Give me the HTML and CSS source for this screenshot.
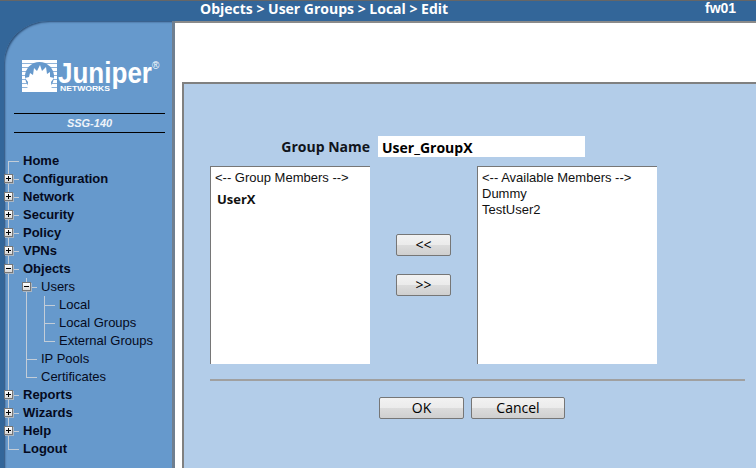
FILE: index.html
```html
<!DOCTYPE html>
<html lang="en">
<head>
<meta charset="utf-8">
<title>Objects &gt; User Groups &gt; Local &gt; Edit</title>
<link rel="stylesheet" href="styles.css">
</head>
<body>
<header class="topbar">
  <div class="crumb">Objects &gt; User Groups &gt; Local &gt; Edit</div>
  <div class="host">fw01</div>
</header>
<div class="shell">
  <aside class="sidebar">
    <svg class="logo" width="140" height="36" viewBox="0 0 140 36" aria-label="Juniper Networks">
      <rect x="0" y="0" width="35" height="32" fill="#fff"/>
      <g fill="#8fb3d9">
        <rect x="0" y="3" width="35" height="1"/><rect x="0" y="7" width="35" height="1"/>
        <rect x="0" y="11" width="35" height="1"/><rect x="0" y="15" width="35" height="1"/>
        <rect x="0" y="19" width="35" height="1"/><rect x="0" y="23" width="35" height="1"/>
        <rect x="0" y="27" width="35" height="1"/>
      </g>
      <circle cx="17.5" cy="16.5" r="14.5" fill="#6699cc"/>
      <path fill="#fff" d="M18 5 L20 11 L24 7 L25 14 L28 12 L28 17 L32 18 L29 22 L30 32 L5 32 L6 22 L3 18 L7 17 L8 13 L11 15 L12 8 L15 11 Z"/>
      <text class="logo-word" x="36" y="23" textLength="94" lengthAdjust="spacingAndGlyphs">Juniper</text>
      <text class="logo-sub" x="38" y="31" textLength="50" lengthAdjust="spacingAndGlyphs">NETWORKS</text>
      <text class="logo-reg" x="130" y="9">®</text>
    </svg>
    <div class="model">SSG-140</div>
    <nav class="tree">
      <div class="row top first"><span class="leaf">Home</span></div>
      <div class="row top"><i class="box plus"></i><span>Configuration</span></div>
      <div class="row top"><i class="box plus"></i><span>Network</span></div>
      <div class="row top"><i class="box plus"></i><span>Security</span></div>
      <div class="row top"><i class="box plus"></i><span>Policy</span></div>
      <div class="row top"><i class="box plus"></i><span>VPNs</span></div>
      <div class="row top"><i class="box minus"></i><span>Objects</span></div>
      <div class="sub sub1">
        <div class="row second"><i class="box minus"></i><span>Users</span></div>
        <div class="sub sub2">
          <div class="row third"><span>Local</span></div>
          <div class="row third"><span>Local Groups</span></div>
          <div class="row third last"><span>External Groups</span></div>
        </div>
        <div class="row second"><span>IP Pools</span></div>
        <div class="row second last"><span>Certificates</span></div>
      </div>
      <div class="row top"><i class="box plus"></i><span>Reports</span></div>
      <div class="row top"><i class="box plus"></i><span>Wizards</span></div>
      <div class="row top"><i class="box plus"></i><span>Help</span></div>
      <div class="row top last"><span>Logout</span></div>
    </nav>
  </aside>
  <main class="content">
    <section class="panel">
      <div class="name-row">
        <label class="name-label">Group Name</label>
        <div class="name-input">User_GroupX</div>
      </div>
      <div class="lists">
        <div class="listbox members">
          <div class="opt">&lt;-- Group Members --&gt;</div>
          <div class="opt strong">UserX</div>
        </div>
        <div class="movers">
          <button class="btn mover">&lt;&lt;</button>
          <button class="btn mover">&gt;&gt;</button>
        </div>
        <div class="listbox avail">
          <div class="opt">&lt;-- Available Members --&gt;</div>
          <div class="opt tight">Dummy</div>
          <div class="opt tight">TestUser2</div>
        </div>
      </div>
      <div class="rule"></div>
      <div class="actions">
        <button class="btn ok">OK</button>
        <button class="btn cancel">Cancel</button>
      </div>
    </section>
  </main>
</div>
</body>
</html>
```
FILE: styles.css
```css
* { box-sizing: border-box; }
html, body { margin: 0; height: 468px; overflow: hidden; }
body {
  background: #336699;
  border-top: 1px solid #666;
  font-family: "Liberation Sans", Arial, sans-serif;
  display: flex;
  flex-direction: column;
}
.topbar {
  height: 20px;
  flex: none;
  display: flex;
  color: #fff;
  font-weight: bold;
  line-height: 14px;
}
.crumb {
  margin-left: 200px;
  width: 505px;
  font-family: "Open Sans", sans-serif;
  font-size: 14px;
  line-height: 16px;
}
.host { font-size: 14px; line-height: 15px; }
.shell { flex: 1; display: flex; min-height: 0; }
.sidebar {
  width: 171px;
  margin-left: 4px;
  flex: none;
  background: #6699cc;
  border-top-left-radius: 44px 42px;
  border-right: 3px solid #6f7f90;
  box-shadow: inset 2px 2px 2px -1px #2b4f78;
  padding-top: 39px;
}
.logo { display: block; margin-left: 18px; overflow: visible; }
.logo-word { font-family: "Liberation Sans", sans-serif; font-weight: bold; font-size: 30px; fill: #fff; }
.logo-sub { font-family: "Liberation Sans", sans-serif; font-weight: bold; font-size: 7px; fill: #fff; }
.logo-reg { font-family: "Liberation Sans", sans-serif; font-size: 10px; fill: #fff; }
.model {
  margin: 17px 7px 0 10px;
  height: 20px;
  border-top: 1px solid #000;
  border-bottom: 1px solid #000;
  color: #eef3f9;
  font-style: italic;
  font-weight: bold;
  font-size: 11px;
  line-height: 18px;
  text-align: center;
}
.tree { margin-top: 19px; color: #050a20; }
.row {
  height: 18px;
  line-height: 18px;
  font-size: 13px;
  position: relative;
  white-space: nowrap;
}
.row.top { font-size: 13px; font-weight: bold; padding-left: 19px; }
.row.second { padding-left: 37px; }
.row.third { padding-left: 55px; }
.row::before {
  content: "";
  position: absolute;
  top: 9px;
  height: 1px;
  background: #c3cdd8;
}
.row.top::before { left: 4px; width: 11px; }
.row.second::before { left: 22px; width: 11px; }
.row.third::before { left: 40px; width: 11px; }
.row::after {
  content: "";
  position: absolute;
  top: 0;
  bottom: 0;
  width: 1px;
  background: #c3cdd8;
}
.row.top::after { left: 4px; }
.row.second::after { left: 22px; }
.row.third::after { left: 40px; }
.row.first::after { top: 9px; }
.row.last::after { bottom: 8px; }
.sub { position: relative; }
.sub::before {
  content: "";
  position: absolute;
  top: 0;
  bottom: 0;
  left: 4px;
  width: 1px;
  background: #c3cdd8;
}
.sub2::before { left: 22px; }
.box {
  position: absolute;
  top: 4px;
  left: 0;
  width: 9px;
  height: 9px;
  z-index: 1;
  border: 1px solid #777;
  background: linear-gradient(#fff, #d8d8d8);
  box-shadow: 1px 1px 0 #a9b6c4;
}
.second .box { left: 18px; }
.box::before {
  content: "";
  position: absolute;
  left: 1px;
  top: 3px;
  width: 5px;
  height: 1px;
  background: #000;
}
.plus::after {
  content: "";
  position: absolute;
  left: 3px;
  top: 1px;
  width: 1px;
  height: 5px;
  background: #000;
}
.content {
  flex: 1;
  min-width: 0;
  background: #fff;
  border-top: 2px solid #8a8a8a;
  padding: 59px 0 0 7px;
  display: flex;
}
.panel {
  flex: 1;
  background: #b3cde9;
  border-top: 2px solid #808080;
  border-left: 2px solid #808080;
  padding: 52px 0 0 26px;
}
.name-row { display: flex; align-items: center; gap: 8px; height: 21px; }
.name-label {
  width: 160px;
  text-align: right;
  font-family: "Open Sans", sans-serif;
  font-weight: bold;
  font-size: 14px;
  color: #10141c;
  line-height: 20px;
}
.name-input {
  width: 207px;
  height: 21px;
  background: #fff;
  padding-left: 4px;
  font-family: "Open Sans", sans-serif;
  font-weight: bold;
  font-size: 14px;
  line-height: 24px;
  color: #000;
}
.lists { display: flex; margin-top: 9px; height: 198px; }
.listbox {
  background: #fff;
  border-top: 1px solid #767676;
  border-left: 1px solid #767676;
  font-size: 13px;
  color: #111;
}
.members { width: 160px; padding: 4px 0 0 4px; }
.avail { width: 180px; padding: 4px 0 0 4px; }
.opt { line-height: 14px; height: 14px; white-space: nowrap; }
.strong { font-family: "Open Sans", sans-serif; font-weight: bold; font-size: 13px; margin: 5px 0 0 2px; height: 18px; line-height: 18px; }
.tight { font-size: 13px; line-height: 16px; height: 16px; position: relative; top: 1px; }
.movers {
  width: 107px;
  display: flex;
  flex-direction: column;
  gap: 18px;
  padding: 68px 0 0 26px;
}
.btn {
  display: block;
  padding: 0;
  margin: 0;
  border: 1px solid #767676;
  border-radius: 2px;
  background: linear-gradient(#f2f2f2 0, #ebebeb 50%, #dcdcdc 50%, #cfcfcf 100%);
  font-family: "Open Sans", sans-serif;
  font-size: 14px;
  line-height: 18px;
  color: #000;
  height: 22px;
}
.mover { width: 55px; }
.rule { margin-top: 15px; width: 535px; height: 2px; background: #a0a0a0; }
.actions { display: flex; gap: 7px; margin: 16px 0 0 169px; }
.ok { width: 85px; }
.cancel { width: 94px; }
```
